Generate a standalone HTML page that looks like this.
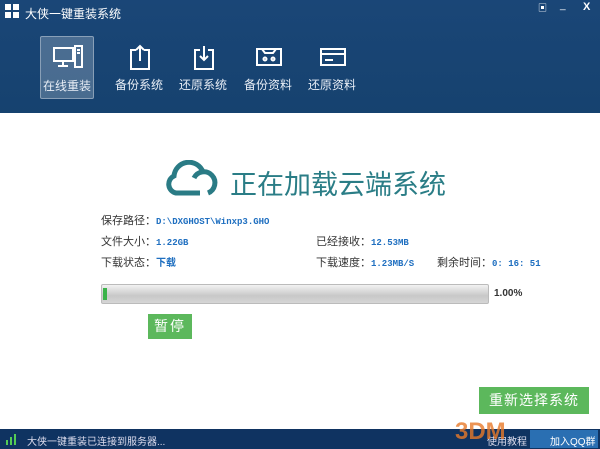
<!DOCTYPE html>
<html><head><meta charset="utf-8"><style>
body{margin:0;width:600px;height:449px;overflow:hidden;background:#fff;font-family:"Liberation Sans","Noto Sans CJK SC",sans-serif;position:relative}
.hd{position:absolute;left:0;top:0;width:600px;height:113px;background:linear-gradient(#1a4677,#16426f)}
.t{position:absolute;color:#fff;font-size:12px;white-space:nowrap}
.nav{position:absolute;top:36px;width:52px;height:61px;text-align:center}
.nav.sel{background:rgba(255,255,255,.22);border:1px solid rgba(255,255,255,.35);border-radius:2px}
.nav span{position:absolute;left:-10px;right:-10px;top:40px;color:#e8eef6;font-size:12px}
.nav svg{position:absolute;left:12px;top:8px}
.g{position:absolute;font-size:10px;color:#333;white-space:nowrap}
.v{color:#1f6fc0;font-family:"Liberation Mono",monospace;font-weight:bold;font-size:9px}
.ft{position:absolute;left:0;top:429px;width:600px;height:20px;background:#0f3361}
.btn{position:absolute;background:#5cb85c;color:#fff;text-align:center}
</style></head><body>
<div class="hd"></div>
<svg style="position:absolute;left:5px;top:4px" width="14" height="14"><rect x="0" y="0" width="6" height="6" fill="#fff"/><rect x="8" y="0" width="6" height="6" fill="#fff"/><rect x="0" y="8" width="6" height="6" fill="#fff"/><rect x="8" y="8" width="6" height="6" fill="#fff"/></svg>
<div class="t" style="left:25px;top:5px;font-size:12px">大侠一键重装系统</div>
<div class="t" style="left:538px;top:1px;font-size:9px">▣</div>
<div class="t" style="left:560px;top:0px;font-size:10px">_</div>
<div class="t" style="left:583px;top:1px;font-size:11px;font-weight:bold">X</div>
<div class="nav sel" style="left:40px"><svg width="30" height="24" fill="none" stroke="#fff" stroke-width="2"><rect x="1" y="3" width="19" height="13"/><path d="M10 16v4M5 21h10"/><rect x="22" y="1" width="7" height="21"/><path d="M24 5h3M24 8h3"/></svg><span>在线重装</span></div>
<div class="nav" style="left:113px"><svg width="30" height="26" fill="none" stroke="#fff" stroke-width="2"><path d="M11 6H6v19h18V6h-5M15 17V2M11 6l4-4 4 4"/></svg><span>备份系统</span></div>
<div class="nav" style="left:177px"><svg width="30" height="26" fill="none" stroke="#fff" stroke-width="2"><path d="M11 6H6v19h18V6h-5M15 2v14M11 12l4 4 4-4"/></svg><span>还原系统</span></div>
<div class="nav" style="left:242px"><svg width="30" height="26" fill="none" stroke="#fff" stroke-width="2"><rect x="3" y="5" width="24" height="16"/><path d="M8 5l3 4h8l3-4"/><circle cx="11" cy="15" r="1.5"/><circle cx="19" cy="15" r="1.5"/></svg><span>备份资料</span></div>
<div class="nav" style="left:306px"><svg width="30" height="26" fill="none" stroke="#fff" stroke-width="2"><rect x="3" y="5" width="24" height="16"/><path d="M3 10h24M7 16h8"/></svg><span>还原资料</span></div>
<svg style="position:absolute;left:164px;top:160px" width="62" height="38" fill="none" stroke="#2a7b85" stroke-width="5"><path d="M36 33H12a9 9 0 0 1-2-17a15 15 0 0 1 29-4"/><path d="M30 18a11 11 0 1 1 14 15"/></svg>
<div style="position:absolute;left:230px;top:163px;font-size:27px;color:#2a7d86;white-space:nowrap">正在加载云端系统</div>
<div class="g" style="left:101px;top:212px;font-size:11px">保存路径：<span class="v">D:\DXGHOST\Winxp3.GHO</span></div>
<div class="g" style="left:101px;top:233px;font-size:11px">文件大小：<span class="v">1.22GB</span></div>
<div class="g" style="left:316px;top:233px;font-size:11px">已经接收：<span class="v">12.53MB</span></div>
<div class="g" style="left:101px;top:254px;font-size:11px">下载状态：<span class="v" style="font-family:inherit;font-size:10px">下载</span></div>
<div class="g" style="left:316px;top:254px;font-size:11px">下载速度：<span class="v">1.23MB/S</span></div>
<div class="g" style="left:437px;top:254px;font-size:11px">剩余时间：<span class="v">0: 16: 51</span></div>
<div style="position:absolute;left:101px;top:284px;width:386px;height:18px;background:linear-gradient(#f2f2f2,#c8c8c8 60%,#d6d6d6);border:1px solid #bbb;border-radius:2px"><div style="width:4px;height:12px;margin:3px 1px;background:#3bb34a"></div></div>
<div class="g" style="left:494px;top:288px;font-weight:bold;font-size:10px">1.00%</div>
<div class="btn" style="left:148px;top:314px;width:44px;height:25px;line-height:25px;font-size:14px;letter-spacing:2px">暂停</div>
<div class="btn" style="left:479px;top:387px;width:110px;height:27px;line-height:27px;font-size:14px;letter-spacing:1px">重新选择系统</div>
<div class="ft"></div>
<svg style="position:absolute;left:6px;top:434px" width="12" height="11"><rect x="0" y="6" width="2" height="5" fill="#5c5"/><rect x="4" y="3" width="2" height="8" fill="#5c5"/><rect x="8" y="0" width="2" height="11" fill="#5c5"/></svg>
<div class="t" style="left:27px;top:433px;font-size:10px;color:#dde">大侠一键重装已连接到服务器...</div>
<div class="t" style="left:487px;top:433px;font-size:10px;color:#dde">使用教程</div>
<div style="position:absolute;left:530px;top:430px;width:68px;height:18px;background:#2a6fb2"></div>
<div class="t" style="left:550px;top:433px;font-size:10px">加入QQ群</div>
<div style="position:absolute;left:455px;top:418px;font-size:24px;font-weight:bold;color:#e87a2a;opacity:.8">3DM</div>
</body></html>
